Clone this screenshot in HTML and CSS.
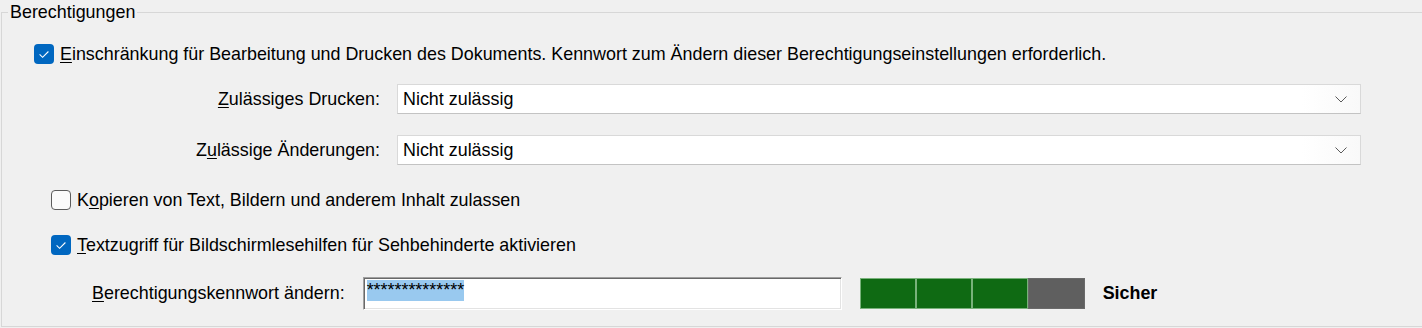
FILE: index.html
```html
<!DOCTYPE html>
<html lang="de">
<head>
<meta charset="utf-8">
<title>Berechtigungen</title>
<link rel="stylesheet" href="styles.css">
</head>
<body>
<fieldset class="group">
  <legend class="group-title">Berechtigungen</legend>

  <div class="row row-main">
    <span class="cb cb-checked"><svg viewBox="0 0 20 20" width="20" height="20"><path d="M5.6 10.4 L8.6 13.3 L14.4 7.5" fill="none" stroke="#fff" stroke-width="1.1"/></svg></span>
    <span class="cb-label"><u>E</u>inschränkung für Bearbeitung und Drucken des Dokuments. Kennwort zum Ändern dieser Berechtigungseinstellungen erforderlich.</span>
  </div>

  <div class="row row-select row-print">
    <span class="field-label"><u>Z</u>ulässiges Drucken:</span>
    <div class="combo">
      <span class="combo-text">Nicht zulässig</span>
      <svg class="chevron" viewBox="0 0 12 7" width="12" height="7"><path d="M0.5 0.5 L6 6 L11.5 0.5" fill="none" stroke="#5a5a5a" stroke-width="1"/></svg>
    </div>
  </div>

  <div class="row row-select row-change">
    <span class="field-label">Z<u>u</u>lässige Änderungen:</span>
    <div class="combo">
      <span class="combo-text">Nicht zulässig</span>
      <svg class="chevron" viewBox="0 0 12 7" width="12" height="7"><path d="M0.5 0.5 L6 6 L11.5 0.5" fill="none" stroke="#5a5a5a" stroke-width="1"/></svg>
    </div>
  </div>

  <div class="row row-sub row-copy">
    <span class="cb cb-empty"></span>
    <span class="cb-label">K<u>o</u>pieren von Text, Bildern und anderem Inhalt zulassen</span>
  </div>

  <div class="row row-sub row-access">
    <span class="cb cb-checked"><svg viewBox="0 0 20 20" width="20" height="20"><path d="M5.6 10.4 L8.6 13.3 L14.4 7.5" fill="none" stroke="#fff" stroke-width="1.1"/></svg></span>
    <span class="cb-label"><u>T</u>extzugriff für Bildschirmlesehilfen für Sehbehinderte aktivieren</span>
  </div>

  <div class="row row-pass">
    <span class="pass-label"><u>B</u>erechtigungskennwort ändern:</span>
    <div class="pass-input"><span class="pass-sel">**************</span></div>
    <div class="strength">
      <span class="seg seg-on"></span>
      <span class="seg seg-on"></span>
      <span class="seg seg-on"></span>
      <span class="seg seg-off"></span>
    </div>
    <span class="strength-text">Sicher</span>
  </div>
</fieldset>
</body>
</html>
```

FILE: styles.css
```css
html, body {
  margin: 0;
  padding: 0;
  background: #f0f0f0;
  overflow: hidden;
}

body {
  font-family: "Liberation Sans", Arial, sans-serif;
  font-size: 17.9px;
  color: #000;
  width: 1422px;
  height: 328px;
}

u {
  text-decoration: underline;
  text-underline-offset: 2px;
  text-decoration-thickness: 1px;
}

.group {
  margin: 2px 0 0 1px;
  padding: 0 0 16px 0;
  border: 1px solid #d7d7d7;
  border-right: none;
  display: flex;
  flex-direction: column;
  min-width: 0;
}

.group-title {
  margin-left: 6px;
  padding: 0 2px;
  line-height: 20px;
  height: 20px;
}

.row {
  display: flex;
  align-items: center;
}

.row-main {
  margin-top: 22px;
  height: 20px;
  padding-left: 32px;
  gap: 6px;
}

.cb {
  width: 20px;
  height: 20px;
  box-sizing: border-box;
  border-radius: 4px;
  flex: none;
  display: block;
}

.cb svg {
  display: block;
}

.cb-checked {
  background: #0067c0;
}

.cb-empty {
  background: #fbfbfb;
  border: 1px solid #5c5c5c;
}

.cb-label {
  line-height: 20px;
  white-space: nowrap;
}

.row-select {
  height: 30px;
  gap: 17px;
}

.row-print {
  margin-top: 20px;
}

.row-change {
  margin-top: 21px;
}

.field-label {
  width: 378px;
  text-align: right;
  white-space: nowrap;
}

.combo {
  width: 964px;
  height: 30px;
  box-sizing: border-box;
  background: linear-gradient(to right, #fff 94%, #f9f9f9 100%);
  border: 1px solid #d9d9d9;
  border-bottom-color: #c3c3c3;
  display: flex;
  align-items: center;
  justify-content: space-between;
  padding: 0 13px 0 5px;
}

.combo-text {
  line-height: 20px;
}

.chevron {
  display: block;
}

.row-sub {
  height: 20px;
  padding-left: 49px;
  gap: 6px;
}

.row-copy {
  margin-top: 25px;
}

.row-access {
  margin-top: 25px;
}

.row-pass {
  margin-top: 21px;
  height: 34px;
  padding-left: 90px;
  gap: 18px;
}

.pass-label {
  white-space: nowrap;
}

.pass-input {
  width: 479px;
  height: 33px;
  box-sizing: border-box;
  background: #fff;
  border-top: 1px solid #a0a0a0;
  border-left: 1px solid #a0a0a0;
  border-right: 1px solid #fff;
  border-bottom: 1px solid #fff;
  box-shadow: inset 1px 1px 0 #696969, inset -1px -1px 0 #e3e3e3;
  padding: 2px 0 0 3px;
  display: flex;
  align-items: flex-start;
}

.pass-sel {
  background: #99c9ef;
  line-height: 21px;
  height: 21px;
  letter-spacing: 0;
}

.strength {
  display: flex;
  height: 31px;
  width: 225px;
}

.seg {
  flex: 1;
  box-sizing: border-box;
  height: 31px;
}

.seg-on {
  background: #0f6a13;
  border: 1px solid #79b27b;
}

.seg-off {
  background: #5f5f5f;
  border: 1px solid #6a6a6a;
}

.strength-text {
  font-weight: bold;
  white-space: nowrap;
}
```
